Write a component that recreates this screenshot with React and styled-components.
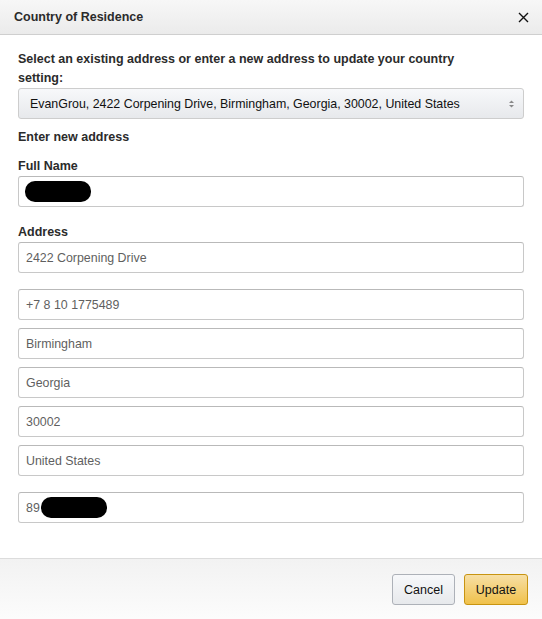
import React from "react";
import styled, { createGlobalStyle } from "styled-components";

const Global = createGlobalStyle`
  html, body { margin: 0; padding: 0; background: #fff; }
  body { font-family: "Liberation Sans", Arial, sans-serif; font-size: 12.5px; color: #111; }
  * { box-sizing: border-box; }
`;

const Dialog = styled.div`
  width: 542px;
  height: 619px;
  display: flex;
  flex-direction: column;
  background: #fff;
`;

const Header = styled.div`
  height: 35px;
  flex: none;
  display: flex;
  align-items: center;
  justify-content: space-between;
  padding: 0 13px 0 14px;
  background: linear-gradient(#f7f7f7, #ebebeb);
  border-bottom: 1px solid #cfcfcf;
`;

const Title = styled.h4`
  margin: 0;
  font-size: 12.5px;
  font-weight: bold;
  color: #2b2b2b;
`;

const Close = styled.button`
  border: 0;
  background: none;
  padding: 0;
  width: 12px;
  height: 12px;
  display: flex;
  align-items: center;
  justify-content: center;
  cursor: pointer;
`;

const Body = styled.div`
  flex: 1;
  padding: 15px 18px 0 18px;
  display: flex;
  flex-direction: column;
`;

const Label = styled.div`
  font-weight: bold;
  font-size: 12.5px;
  color: #2b2b2b;
  line-height: 19px;
  max-width: ${(p) => p.$maxw || "none"};
  margin-top: ${(p) => p.$mt || 0}px;
  margin-bottom: ${(p) => p.$mb || 0}px;
`;

const SelectBox = styled.div`
  height: 31px;
  display: flex;
  align-items: center;
  justify-content: space-between;
  padding: 0 8px 0 11px;
  border: 1px solid #cdcdcd;
  border-radius: 3px;
  background: linear-gradient(#f7f8fa, #e7e9ec);
  color: #111;
  font-size: 12.4px;
`;

const Field = styled.div`
  height: 31px;
  display: flex;
  align-items: center;
  padding: 0 7px;
  border: 1px solid #c8c8c8;
  border-top-color: #b9b9b9;
  border-radius: 3px;
  background: #fff;
  color: #5f5f5f;
  font-size: 12.4px;
  margin-top: ${(p) => p.$mt || 0}px;
`;

const Redact = styled.span`
  display: inline-block;
  width: ${(p) => p.$w}px;
  height: 21px;
  border-radius: 10px;
  background: #000;
  margin-left: ${(p) => p.$ml || 0}px;
`;

const Footer = styled.div`
  height: 61px;
  flex: none;
  border-top: 1px solid #dcdcdc;
  background: linear-gradient(#f2f2f2, #fcfcfc);
  display: flex;
  justify-content: flex-end;
  align-items: flex-start;
  gap: 9px;
  padding: 15px 14px 0 0;
`;

const Button = styled.button`
  height: 31px;
  width: ${(p) => (p.$primary ? 64 : 63)}px;
  padding: 0;
  border: 1px solid ${(p) => (p.$primary ? "#c89411" : "#adb1b8")};
  border-radius: 3px;
  background: ${(p) =>
    p.$primary
      ? "linear-gradient(#f7dfa5, #f0c14b)"
      : "linear-gradient(#f7f8fa, #e7e9ec)"};
  font-family: "Liberation Sans", Arial, sans-serif;
  font-size: 12.5px;
  color: #111;
  cursor: pointer;
`;

const Arrows = () => (
  <svg width="7" height="10" viewBox="0 0 7 10">
    <path d="M1 4 L3.5 1.5 L6 4 Z" fill="#888" />
    <path d="M1 6 L3.5 8.5 L6 6 Z" fill="#888" />
  </svg>
);

export default function App() {
  return (
    <>
      <Global />
      <Dialog>
        <Header>
          <Title>Country of Residence</Title>
          <Close aria-label="close">
            <svg width="11" height="11" viewBox="0 0 11 11">
              <path d="M1 1 L10 10 M10 1 L1 10" stroke="#111" strokeWidth="1.4" />
            </svg>
          </Close>
        </Header>
        <Body>
          <Label $maxw="470px">Select an existing address or enter a new address to update your country setting:</Label>
          <SelectBox>
            <span>EvanGrou, 2422 Corpening Drive, Birmingham, Georgia, 30002, United States</span>
            <Arrows />
          </SelectBox>
          <Label $mt={9} $mb={10}>Enter new address</Label>
          <Label>Full Name</Label>
          <Field>
            <Redact $w={66} $ml={-1} />
          </Field>
          <Label $mt={16}>Address</Label>
          <Field>2422 Corpening Drive</Field>
          <Field $mt={16}>+7 8 10 1775489</Field>
          <Field $mt={8}>Birmingham</Field>
          <Field $mt={8}>Georgia</Field>
          <Field $mt={8}>30002</Field>
          <Field $mt={8}>United States</Field>
          <Field $mt={16}>
            89<Redact $w={66} $ml={1} />
          </Field>
        </Body>
        <Footer>
          <Button>Cancel</Button>
          <Button $primary>Update</Button>
        </Footer>
      </Dialog>
    </>
  );
}
